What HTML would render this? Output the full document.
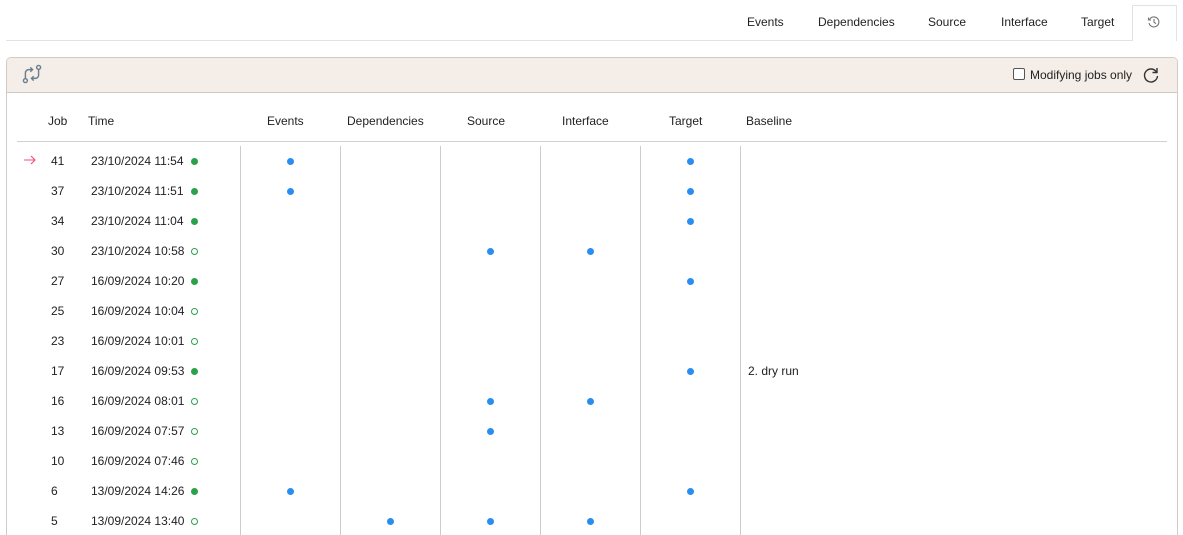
<!DOCTYPE html>
<html><head><style>
html,body{margin:0;width:1183px;height:535px;overflow:hidden}
body{background:#fff;font-family:"Liberation Sans",Arial,sans-serif;font-size:12px;color:#222;position:relative}
.a{position:absolute;white-space:nowrap}
.tab{position:absolute;top:15px;font-size:12px;color:#222}
.dot{position:absolute;width:7px;height:7px;border-radius:50%;background:#2a8ef0}
.g{position:absolute;width:7px;height:7px;border-radius:50%;background:#2aa14a}
.go{position:absolute;width:5px;height:5px;border-radius:50%;border:1px solid #2aa14a}
.vl{position:absolute;top:146px;width:1px;height:389px;background:#d2cac4}
</style></head><body>
<div class="a" style="left:6px;top:40px;width:1127px;height:1px;background:#e2e2e2"></div>
<div class="tab" style="left:747px">Events</div>
<div class="tab" style="left:818px">Dependencies</div>
<div class="tab" style="left:928px">Source</div>
<div class="tab" style="left:1001px">Interface</div>
<div class="tab" style="left:1081px">Target</div>
<div class="a" style="left:1132px;top:5px;width:45px;height:36px;border:1px solid #e2e2e2;border-bottom:none;background:#fff;box-sizing:border-box"></div>
<svg class="a" style="left:1147px;top:15px" width="14" height="14" viewBox="0 0 14 14" fill="none" stroke="#777" stroke-width="1.1"><path d="M2.5 4.5A5 5 0 1 1 2 8"/><path d="M1.5 2.5v2.5h2.5"/><path d="M7 4v3.2l2 1.5"/></svg>
<div class="a" style="left:6px;top:57px;width:1172px;height:478px;border:1px solid #d2cac4;border-bottom:none;border-radius:5px 5px 0 0;box-sizing:border-box"></div>
<div class="a" style="left:7px;top:58px;width:1170px;height:34px;background:#f5ede7;border-bottom:1px solid #d2cac4;border-radius:4px 4px 0 0"></div>
<svg class="a" style="left:21px;top:63px" width="22" height="22" viewBox="0 0 20 20" fill="none" stroke="#6a7f92" stroke-width="1.3"><circle cx="4" cy="16" r="1.8"/><circle cx="16" cy="4" r="1.8"/><path d="M4 14V9a3 3 0 0 1 3-3h3"/><path d="M8.5 4l2 2-2 2"/><path d="M16 6v5a3 3 0 0 1-3 3h-3"/><path d="M11.5 12l-2 2 2 2"/></svg>
<div class="a" style="left:1013px;top:68px;width:12px;height:12px;border:1px solid #555;border-radius:2px;background:#fff;box-sizing:border-box"></div>
<div class="a" style="left:1030px;top:68px">Modifying jobs only</div>
<svg class="a" style="left:1142px;top:66px" width="18" height="18" viewBox="0 0 18 18" fill="none" stroke="#333" stroke-width="1.4"><path d="M14.5 6A6.5 6.5 0 1 0 15.5 10"/><path d="M15 2v4.5h-4.5"/></svg>
<div class="a" style="left:48px;top:114px">Job</div>
<div class="a" style="left:88px;top:114px">Time</div>
<div class="a" style="left:267px;top:114px">Events</div>
<div class="a" style="left:347px;top:114px">Dependencies</div>
<div class="a" style="left:467px;top:114px">Source</div>
<div class="a" style="left:562px;top:114px">Interface</div>
<div class="a" style="left:669px;top:114px">Target</div>
<div class="a" style="left:746px;top:114px">Baseline</div>
<div class="a" style="left:17px;top:141px;width:1150px;height:1px;background:#d0d0d0"></div>
<div class="vl" style="left:240px"></div><div class="vl" style="left:340px"></div><div class="vl" style="left:440px"></div><div class="vl" style="left:540px"></div><div class="vl" style="left:640px"></div><div class="vl" style="left:740px"></div>
<svg class="a" style="left:23px;top:155px" width="14" height="10" viewBox="0 0 14 10" fill="none" stroke="#f0506e" stroke-width="1.1"><path d="M1 5h11M8 1l4 4-4 4"/></svg>
<div id="rows"></div>
<script>
var R=[["41","23/10/2024 11:54",1,[0,4]],["37","23/10/2024 11:51",1,[0,4]],["34","23/10/2024 11:04",1,[4]],["30","23/10/2024 10:58",0,[2,3]],["27","16/09/2024 10:20",1,[4]],["25","16/09/2024 10:04",0,[]],["23","16/09/2024 10:01",0,[]],["17","16/09/2024 09:53",1,[4],"2. dry run"],["16","16/09/2024 08:01",0,[2,3]],["13","16/09/2024 07:57",0,[2]],["10","16/09/2024 07:46",0,[]],["6","13/09/2024 14:26",1,[0,4]],["5","13/09/2024 13:40",0,[1,2,3]]];
var h="";R.forEach(function(r,i){var y=154+i*30;
h+='<div class="a" style="left:51px;top:'+y+'px">'+r[0]+'</div><div class="a" style="left:91px;top:'+y+'px">'+r[1]+'</div>';
h+='<div class="'+(r[2]?'g':'go')+'" style="left:191px;top:'+(y+4)+'px"></div>';
r[3].forEach(function(c){h+='<div class="dot" style="left:'+(287+c*100)+'px;top:'+(y+4)+'px"></div>'});
if(r[4])h+='<div class="a" style="left:748px;top:'+y+'px">'+r[4]+'</div>';});
document.getElementById("rows").innerHTML=h;
</script>
</body></html>
